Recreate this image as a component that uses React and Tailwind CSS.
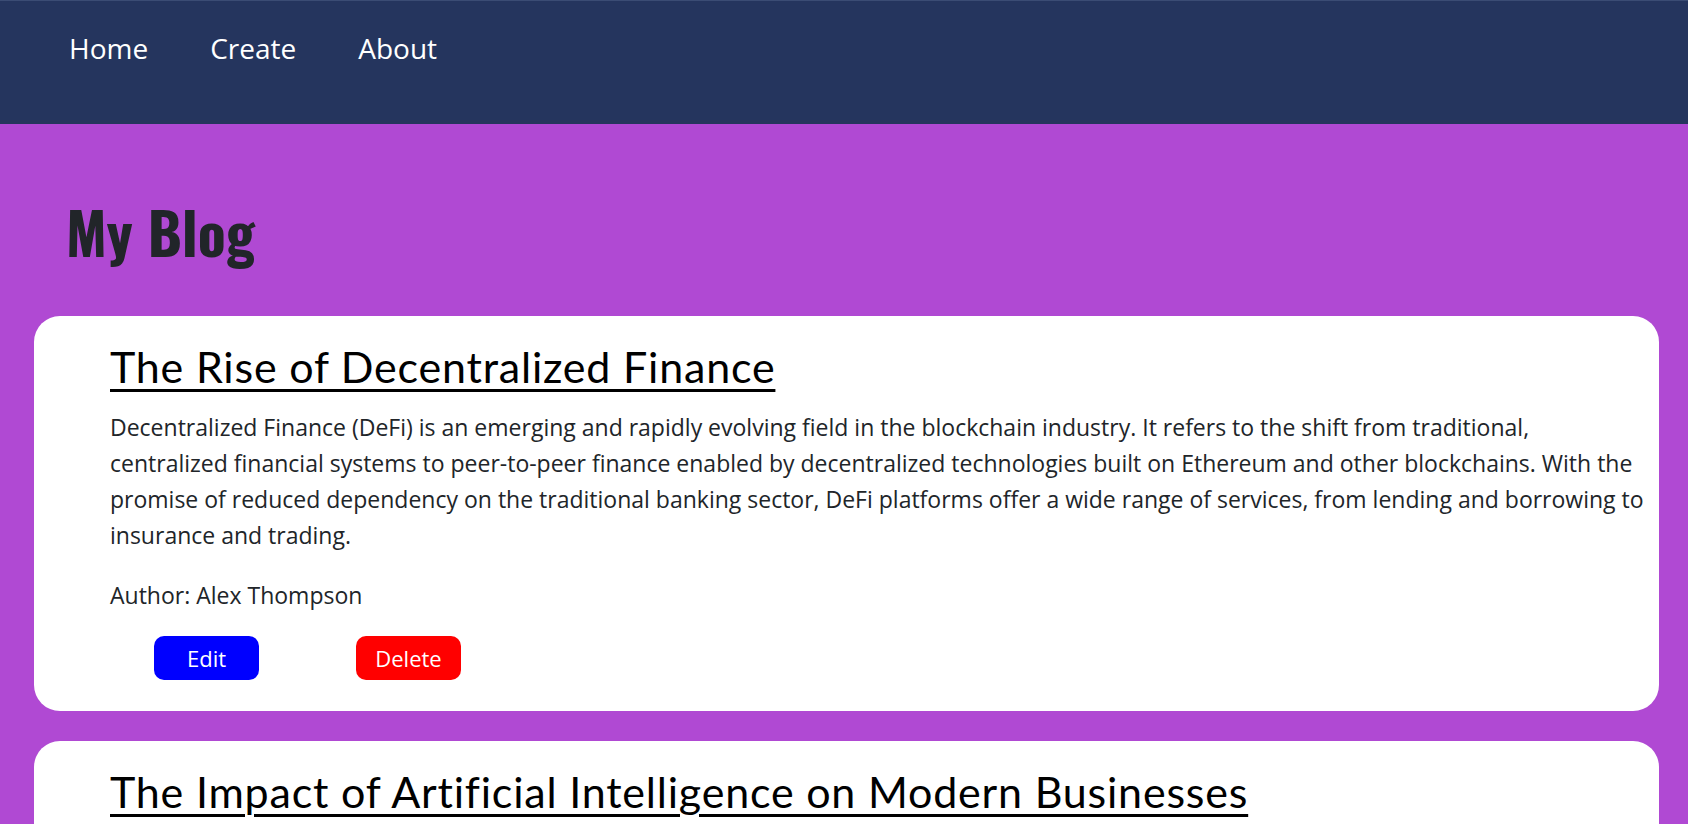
import React from "react";

const posts = [
  {
    id: 1,
    title: "The Rise of Decentralized Finance",
    body: "Decentralized Finance (DeFi) is an emerging and rapidly evolving field in the blockchain industry. It refers to the shift from traditional, centralized financial systems to peer-to-peer finance enabled by decentralized technologies built on Ethereum and other blockchains. With the promise of reduced dependency on the traditional banking sector, DeFi platforms offer a wide range of services, from lending and borrowing to insurance and trading.",
    author: "Alex Thompson",
  },
  {
    id: 2,
    title: "The Impact of Artificial Intelligence on Modern Businesses",
    body: "Artificial Intelligence (AI) is no longer a concept of the future. It's very much a part of our present, reshaping industries and enhancing the capabilities of existing systems.",
    author: "Jordan Lee",
  },
];

function Navbar() {
  return (
    <nav className="h-[124px] bg-[#25355e] border-t border-[#3b4c74] pl-[69px] pt-[28px]">
      <ul className="flex gap-[62px] font-['Open_Sans',sans-serif] text-[28px] leading-[38px] text-white">
        <li>Home</li>
        <li>Create</li>
        <li>About</li>
      </ul>
    </nav>
  );
}

function PostCard({ post }) {
  return (
    <div className="bg-white rounded-[26px] ml-[34px] mr-[29px] mb-[30px] pl-[76px] pr-[13px] pt-[23px] pb-[31px]">
      <h2 className="font-['Lato',sans-serif] text-[43px] leading-[56px] tracking-[0.8px] text-black underline decoration-[3px] underline-offset-[6px]">
        {post.title}
      </h2>
      <p className="mt-[14px] font-['Open_Sans',sans-serif] text-[23px] leading-[36px] text-[#212529]">
        {post.body}
      </p>
      <p className="mt-[24px] font-['Open_Sans',sans-serif] text-[23px] leading-[36px] text-[#212529]">
        Author: {post.author}
      </p>
      <div className="flex mt-[23px] font-['Open_Sans',sans-serif] text-[22px] text-white">
        <button className="w-[105px] h-[44px] ml-[44px] rounded-[10px] bg-[#0000ff]">
          Edit
        </button>
        <button className="w-[105px] h-[44px] ml-[97px] rounded-[10px] bg-[#ff0000]">
          Delete
        </button>
      </div>
    </div>
  );
}

export default function App() {
  return (
    <div className="min-h-screen bg-[#b049d3]">
      <Navbar />
      <div className="pt-[62px]">
        <h1 className="pl-[66px] mb-[40px] font-['Oswald','DejaVu_Sans_Condensed','Liberation_Sans_Narrow',sans-serif] font-bold text-[58px] leading-[90px] text-[#212529]">
          My Blog
        </h1>
        {posts.map((post) => (
          <PostCard key={post.id} post={post} />
        ))}
      </div>
    </div>
  );
}
